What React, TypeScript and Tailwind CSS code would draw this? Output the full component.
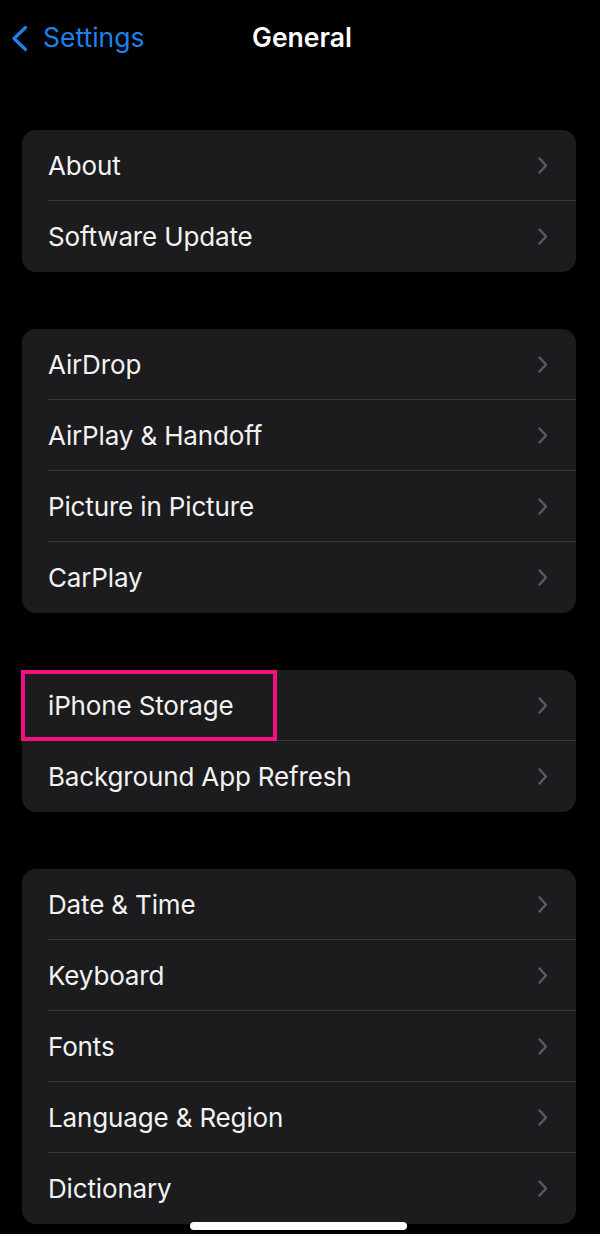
import React from 'react';

const groups: string[][] = [
  ['About', 'Software Update'],
  ['AirDrop', 'AirPlay & Handoff', 'Picture in Picture', 'CarPlay'],
  ['iPhone Storage', 'Background App Refresh'],
  ['Date & Time', 'Keyboard', 'Fonts', 'Language & Region', 'Dictionary'],
];

const Chevron: React.FC = () => (
  <svg width="12" height="19" viewBox="0 0 12 19" fill="none" className="shrink-0">
    <path d="M2.5 2.5L9 9.5L2.5 16.5" stroke="#5b5b60" strokeWidth="2.4" strokeLinecap="round" strokeLinejoin="round" />
  </svg>
);

const Row: React.FC<{ label: string; last: boolean; highlight: boolean }> = ({ label, last, highlight }) => (
  <div className="relative h-[71px] pl-[26px] flex">
    <div className={`flex-1 flex items-center justify-between pr-[27px] ${last ? '' : 'border-b border-[#38383a]'}`}>
      <span className="text-[26px] text-[#f2f2f2] tracking-[-0.15px]">{label}</span>
      <Chevron />
    </div>
    {highlight && (
      <div className="absolute left-[-1px] top-0 w-[256px] h-[71px] border-[4px] border-[#f2117f]" />
    )}
  </div>
);

export default function App() {
  return (
    <div className="relative w-[600px] h-[1234px] bg-black overflow-hidden" style={{ fontFamily: 'Inter, "Liberation Sans", sans-serif' }}>
      <div className="h-[76px] grid grid-cols-3 items-center">
        <div className="flex items-center gap-[14px] pl-[10px] text-[#1d82ec]">
          <svg width="19" height="27" viewBox="0 0 19 27" fill="none">
            <path d="M15.5 2.5L4 13.5L15.5 24.5" stroke="#1d82ec" strokeWidth="3.2" strokeLinecap="round" strokeLinejoin="round" />
          </svg>
          <span className="text-[26.5px]">Settings</span>
        </div>
        <div className="text-center text-[26.5px] font-semibold text-white pl-[4px]">General</div>
        <div />
      </div>

      <div className="flex flex-col gap-[57px] mt-[54px] ml-[22px] w-[554px]">
        {groups.map((items, gi) => (
          <div key={gi} className="bg-[#1c1c1e] rounded-[14px]">
            {items.map((label, i) => (
              <Row key={label} label={label} last={i === items.length - 1} highlight={label === 'iPhone Storage'} />
            ))}
          </div>
        ))}
      </div>

      <div className="absolute left-[190px] top-[1222px] w-[217px] h-[8px] rounded-full bg-white" />
    </div>
  );
}
